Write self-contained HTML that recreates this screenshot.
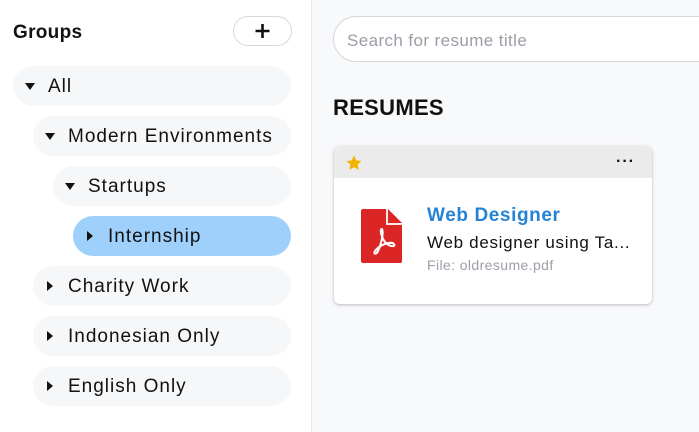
<!DOCTYPE html><html><head><style>
*{box-sizing:border-box;margin:0;padding:0}
body{width:699px;height:432px;overflow:hidden;font-family:"Liberation Sans",sans-serif;background:#f8f9fb;position:relative;color:#111}
.side{position:absolute;left:0;top:0;width:312px;height:432px;background:#fff;border-right:1px solid #e8e9ec}
.h{position:absolute;left:13px;top:22px;font-size:19px;font-weight:bold;letter-spacing:.3px}
.add{position:absolute;left:233px;top:16px;width:59px;height:30px;border:1px solid #d6d8dc;border-radius:15px;background:#fff}
.row{position:absolute;height:40px;right:20px;border-radius:20px;background:#f6f7f9;font-size:19px;line-height:42px;padding-left:35px;letter-spacing:1px}
.row.sel{background:#9fd0fc}
.tri{position:absolute;left:12px;top:17px;width:0;height:0;border-left:5px solid transparent;border-right:5px solid transparent;border-top:7px solid #111}
.tr{position:absolute;left:14px;top:15px;width:0;height:0;border-top:5px solid transparent;border-bottom:5px solid transparent;border-left:6px solid #111}
.search{position:absolute;left:333px;top:16px;width:400px;height:46px;border:1px solid #d6d8dc;border-radius:23px;background:#fff;font-size:17px;color:#9a9ea6;line-height:47px;padding-left:13px;letter-spacing:.4px}
.res{position:absolute;left:333px;top:95px;font-size:22px;font-weight:bold;letter-spacing:.3px}
.card{position:absolute;left:334px;top:146px;width:318px;height:158px;background:#fff;border-radius:6px;box-shadow:0 1px 3px rgba(0,0,0,.25);overflow:hidden}
.ch{height:32px;background:#ebebeb;position:relative}
</style></head><body>
<div class="side">
<div class="h">Groups</div>
<div class="add"><svg width="59" height="30" style="position:absolute;left:-1px;top:-1px"><path d="M29.5 8v14M22.5 15h14" stroke="#111" stroke-width="2.6"/></svg></div>
<div class="row" style="left:13px;top:66px"><span class="tri"></span>All</div>
<div class="row" style="left:33px;top:116px"><span class="tri"></span>Modern Environments</div>
<div class="row" style="left:53px;top:166px"><span class="tri"></span>Startups</div>
<div class="row sel" style="left:73px;top:216px"><span class="tr"></span>Internship</div>
<div class="row" style="left:33px;top:266px"><span class="tr"></span>Charity Work</div>
<div class="row" style="left:33px;top:316px"><span class="tr"></span>Indonesian Only</div>
<div class="row" style="left:33px;top:366px"><span class="tr"></span>English Only</div>
</div>
<div class="search">Search for resume title</div>
<div class="res">RESUMES</div>
<div class="card">
<div class="ch">
<svg width="18" height="18" style="position:absolute;left:11px;top:8px" viewBox="0 0 24 24"><path d="M12 2l3 6.5 7 .8-5.2 4.8 1.5 7L12 17.5 5.7 21l1.5-7L2 9.3l7-.8z" fill="#f0b400"/></svg>
<div style="position:absolute;right:17px;top:7px;font-size:16px;letter-spacing:1px;font-weight:bold">···</div>
</div>
<svg width="42" height="54" style="position:absolute;left:27px;top:63px" viewBox="0 0 42 54"><path d="M2 0H25L41 16V52a2 2 0 0 1-2 2H2a2 2 0 0 1-2-2V2a2 2 0 0 1 2-2z" fill="#dc2626"/><path d="M25 0V16H41" fill="#fff" opacity=".9"/><path d="M27 0V14H41" fill="#dc2626"/><path d="M21 20c-3 0 0 10 4 14 4 4 10 4 8 1-2-3-14 0-19 7-2 3 1 4 3 0 3-6 6-19 4-22z" fill="none" stroke="#fff" stroke-width="2"/></svg>
<div style="position:absolute;left:93px;top:59px;font-size:19px;font-weight:bold;color:#2583d6;letter-spacing:.6px">Web Designer</div>
<div style="position:absolute;left:93px;top:87px;font-size:17px;letter-spacing:.7px">Web designer using Ta...</div>
<div style="position:absolute;left:93px;top:111px;font-size:14px;color:#9ca0a8;letter-spacing:.4px">File: oldresume.pdf</div>
</div>
</body></html>
